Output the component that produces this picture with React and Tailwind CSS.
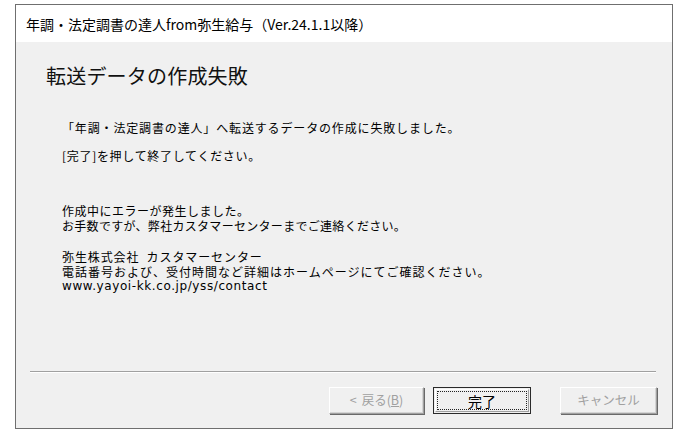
import React from "react";

const jp = { fontFamily: '"Noto Sans CJK JP", "Noto Sans", sans-serif' };

const DisabledButton = ({ children, className = "" }) => (
  <div
    className={
      "h-[27px] flex items-center justify-center bg-[#f0f0f0] border border-t-white border-l-white border-b-[#a0a0a0] border-r-[#a0a0a0] shadow-[inset_-1px_-1px_0_#d4d4d4,1px_1px_0_#696969] text-[12.5px] text-[#a0a0a0] " +
      className
    }
  >
    {children}
  </div>
);

const App = () => {
  return (
    <div className="w-[684px] h-[432px] bg-white pt-[4px] pl-[15px]" style={jp}>
      <div className="w-[658px] h-[425px] border border-[#6f6f6f] flex flex-col">
        <div className="h-[37px] bg-white flex items-center pl-[10px] text-[14px] text-black leading-none">
          年調・法定調書の達人from弥生給与（Ver.24.1.1以降）
        </div>

        <div className="flex-1 bg-[#f0f0f0] flex flex-col">
          <div className="mt-[24px] pl-[30px] text-[20px] leading-[20px] tracking-[0.2px] text-[#111]">
            転送データの作成失敗
          </div>

          <div className="pl-[46px] text-[12px] leading-[15px] text-black">
            <p className="mt-[34px] tracking-[0.85px]">「年調・法定調書の達人」へ転送するデータの作成に失敗しました。</p>
            <p className="mt-[13px] tracking-[0.7px]">[完了]を押して終了してください。</p>

            <div className="mt-[40px]">
              <p className="tracking-[0.5px]">作成中にエラーが発生しました。</p>
              <p className="tracking-[0.3px]">お手数ですが、弊社カスタマーセンターまでご連絡ください。</p>
            </div>

            <div className="mt-[16px]">
              <p className="tracking-[0.9px]">弥生株式会社&nbsp; カスタマーセンター</p>
              <p className="tracking-[1px]">電話番号および、受付時間など詳細はホームページにてご確認ください。</p>
              <p className="text-[12px] tracking-[0.6px]" style={{ fontFamily: '"DejaVu Sans", sans-serif' }}>
                www.yayoi-kk.co.jp/yss/contact
              </p>
            </div>
          </div>

          <div className="flex-1" />

          <div className="ml-[14px] mr-[16px] h-[2px] border-t border-t-[#a0a0a0] border-b border-b-white" />

          <div className="flex justify-end items-center mt-[14px] mb-[14px] pr-[15px]">
            <DisabledButton className="w-[95px]">
              <span className="mr-[5px]">&lt;</span>
              <span>戻る(<span className="underline">B</span>)</span>
            </DisabledButton>
            <div className="ml-[9px] w-[98px] h-[27px] border border-[#2a2a2a] bg-[#f0f0f0] p-[1px]">
              <div className="w-full h-full border border-t-white border-l-white border-b-[#a0a0a0] border-r-[#a0a0a0] p-[1px]">
                <div className="w-full h-full border border-dotted border-[#222] flex items-center justify-center text-[14px] text-black leading-none">
                  完了
                </div>
              </div>
            </div>
            <DisabledButton className="ml-[29px] w-[97px]">キャンセル</DisabledButton>
          </div>
        </div>
      </div>
    </div>
  );
};

export default App;
